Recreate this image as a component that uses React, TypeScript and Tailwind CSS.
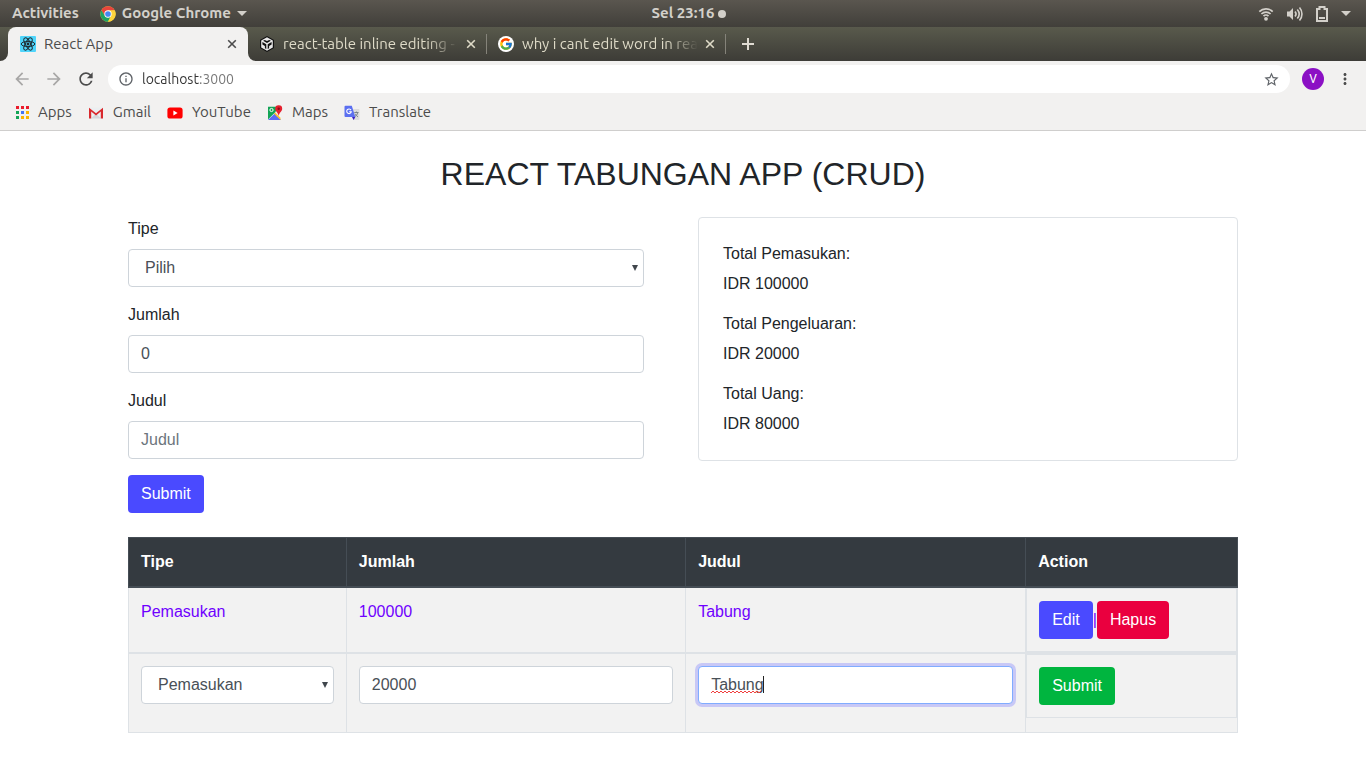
import { useState, type ReactNode, type SelectHTMLAttributes } from "react";
import { FcGoogle } from "react-icons/fc";
import {
  MdArrowBack,
  MdArrowForward,
  MdInfoOutline,
  MdMoreVert,
  MdRefresh,
  MdStarBorder,
} from "react-icons/md";

/* ---------- icons ---------- */

function ChromeIcon() {
  return (
    <svg viewBox="0 0 48 48" className="size-4" aria-hidden="true">
      <circle cx="24" cy="24" r="23" fill="#fdd33c" />
      <path d="M4.1 12.5A23 23 0 0 1 43.9 12.5L24 13.5 14 29.5Z" fill="#e8453c" />
      <path d="M4.1 12.5 14.5 29.5 24 34.5 33 30 24 47A23 23 0 0 1 4.1 12.5Z" fill="#1ea362" />
      <path d="M24 13.5H44.4A23 23 0 0 1 24 47L33.5 29.5Z" fill="#fdd33c" />
      <circle cx="24" cy="24" r="11" fill="#fff" />
      <circle cx="24" cy="24" r="8.5" fill="#4688f1" />
    </svg>
  );
}

function ReactIcon() {
  return (
    <svg viewBox="0 0 16 16" className="size-4 shrink-0" aria-hidden="true">
      <rect width="16" height="16" rx="1" fill="#4fd5fb" />
      <g fill="none" stroke="#1f2a30" strokeWidth="1">
        <ellipse cx="8" cy="8" rx="6.8" ry="2.6" />
        <ellipse cx="8" cy="8" rx="6.8" ry="2.6" transform="rotate(60 8 8)" />
        <ellipse cx="8" cy="8" rx="6.8" ry="2.6" transform="rotate(120 8 8)" />
      </g>
      <circle cx="8" cy="8" r="1.4" fill="#1f2a30" />
    </svg>
  );
}

function CubeIcon() {
  return (
    <svg viewBox="0 0 16 16" className="size-4 shrink-0" aria-hidden="true">
      <path d="M8 0 15 3.900v8.200L8 16 1 12.100V3.900Z" fill="#111" />
      <path d="M8 1.300 13.800 4.500v7L8 14.700 2.200 11.500v-7Z" fill="#e8e8e8" />
      <path d="m5.800 3.900 2.200 1.200 2.200-1.200 1.700.9L8 7 4.100 4.800Z" fill="#111" />
      <path d="M3.400 6 7.300 8.200v4.800l-1.400-.8V10L3.400 8.600Z" fill="#111" />
      <path d="M12.600 6 8.700 8.200v4.800l1.400-.8V10l2.500-1.400Z" fill="#111" />
    </svg>
  );
}

function GoogleTabIcon() {
  return (
    <span className="flex size-4 shrink-0 items-center justify-center rounded-full bg-white">
      <FcGoogle size={14} />
    </span>
  );
}

function AppsIcon() {
  const colors = [
    "#ea1c2c", "#ea1c2c", "#ea1c2c",
    "#13a456", "#4374f5", "#fbb400",
    "#13a456", "#fbb400", "#fbb400",
  ];
  return (
    <svg viewBox="0 0 13 13" className="size-[13px]" aria-hidden="true">
      {colors.map((fill, i) => (
        <rect key={i} x={(i % 3) * 5} y={Math.floor(i / 3) * 5} width="3" height="3" fill={fill} />
      ))}
    </svg>
  );
}

function GmailIcon() {
  return (
    <svg viewBox="0 0 16 16" className="size-4" aria-hidden="true">
      <path d="M1 2.500h14v11H1Z" fill="#eceff1" />
      <path d="M3 13.500 8 8.500l5 5Z" fill="#d5d8db" />
      <path d="M1 2.700 8 8.300l7-5.600V13.500h-2.200V6.500L8 10.500 3.200 6.500v7H1Z" fill="#d9292d" />
    </svg>
  );
}

function YouTubeIcon() {
  return (
    <svg viewBox="0 0 16 16" className="size-4" aria-hidden="true">
      <rect x=".4" y="2.4" width="15.2" height="11.2" rx="2.6" fill="#f00" />
      <path d="M6.4 5.6v4.8L10.6 8Z" fill="#fff" />
    </svg>
  );
}

function MapsIcon() {
  return (
    <svg viewBox="0 0 16 16" className="size-4" aria-hidden="true">
      <path d="M1 1.8h12.5V15H1Z" fill="#f4f4f4" />
      <path d="M1 1.8h9.6L8.5 7 1 14.5Z" fill="#13a456" />
      <path d="m1 15 6.8-6.6L14 15Z" fill="#5b6cf6" />
      <path d="m8.2 7.5 5.3 5.3V15L7 8.7Z" fill="#fbc02d" />
      <circle cx="4.5" cy="5" r="1.6" fill="none" stroke="#fff" />
      <path d="M11.700.3a3.400 3.400 0 0 1 3.500 3.400c0 2.600-2.900 3.500-3.500 7.400-.6-3.900-3.500-4.800-3.500-7.400A3.400 3.400 0 0 1 11.700.3Z" fill="#e5202e" />
      <circle cx="11.700" cy="3.700" r="1.200" fill="#8b0e18" />
    </svg>
  );
}

function TranslateIcon() {
  return (
    <svg viewBox="0 0 16 16" className="size-4" aria-hidden="true">
      <path d="M6 4h8.500a1 1 0 0 1 1 1v9a1 1 0 0 1-1 1H9.500Z" fill="#dcdcdc" />
      <path d="M1.500.700h6.300L11.300 12H1.500a1 1 0 0 1-1-1V1.700a1 1 0 0 1 1-1Z" fill="#5b6ff0" />
      <path d="M8 12h3.300L9.600 15Z" fill="#3a1fc0" />
      <path d="M7 5.100A2.300 2.300 0 1 0 7.300 6.700H5.200" fill="none" stroke="#fff" strokeWidth="1.100" />
      <path d="M10.300 7.500h4.200M12.400 6.500v1M13.700 7.700c-.3 1.700-1.400 3-2.600 3.700M11.300 8.800c.5 1.300 1.600 2.400 2.700 3" fill="none" stroke="#6f7a80" strokeWidth=".9" />
    </svg>
  );
}

function CloseIcon() {
  return (
    <svg viewBox="0 0 10 10" className="size-[10px]" aria-hidden="true">
      <path d="m1.200 1.200 7.600 7.600M8.800 1.200 1.200 8.800" stroke="currentColor" strokeWidth="1.600" />
    </svg>
  );
}

function CaretDown() {
  return (
    <svg viewBox="0 0 10 5" className="h-[5px] w-[10px]" aria-hidden="true">
      <path d="M0 0h10L5 5Z" fill="currentColor" />
    </svg>
  );
}

function WifiIcon() {
  return (
    <svg viewBox="0 0 16 16" className="size-4" fill="none" stroke="currentColor" strokeWidth="1.700" aria-hidden="true">
      <path d="M1.300 5.600C5 1.900 11 1.900 14.700 5.600M3.400 8c2.600-2.600 6.600-2.600 9.200 0M5.500 10.200c1.400-1.400 3.600-1.400 5 0" />
      <circle cx="8" cy="12.800" r="1.900" fill="currentColor" stroke="none" />
    </svg>
  );
}

function VolumeIcon() {
  return (
    <svg viewBox="0 0 16 16" className="size-4" fill="none" stroke="currentColor" strokeWidth="1.600" aria-hidden="true">
      <path d="M0 5.500h2.500L6 2v12l-3.500-3.500H0Z" fill="currentColor" stroke="none" />
      <path d="M8 5.500c1.300 1.500 1.300 3.500 0 5M10.300 3.500c2.300 2.700 2.300 6.300 0 9M12.500 1.500c3.300 3.800 3.300 9.200 0 13" />
    </svg>
  );
}

function BatteryIcon() {
  return (
    <svg viewBox="0 0 12 16" className="h-4 w-3" aria-hidden="true">
      <path d="M1 3h2.500V1h5v2H11v12H1Z" fill="none" stroke="currentColor" strokeWidth="2" />
      <path d="M3 11h6v2H3Z" fill="currentColor" />
    </svg>
  );
}

/* ---------- desktop and browser ---------- */

function DesktopBar() {
  return (
    <header className="grid h-[27px] grid-cols-3 items-center bg-linear-to-b from-[#5a564f] to-[#413f3a] px-3 text-[15px] font-bold text-[#d3d0ca]">
      <div className="flex items-center gap-[21px]">
        <button type="button">Activities</button>
        <button type="button" className="flex items-center gap-1.5">
          <ChromeIcon />
          Google Chrome
          <CaretDown />
        </button>
      </div>
      <button type="button" className="flex items-center gap-1 justify-self-center pl-3">
        Sel 23:16
        <span className="size-2 rounded-full bg-[#d3d0ca]" />
      </button>
      <button type="button" aria-label="System menu" className="flex items-center gap-[13px] justify-self-end pr-[3px]">
        <WifiIcon />
        <VolumeIcon />
        <BatteryIcon />
        <CaretDown />
      </button>
    </header>
  );
}

function InactiveTab({ icon, title }: { icon: ReactNode; title: string }) {
  return (
    <div className="flex h-full w-[239px] items-center text-[#dfdbc8]">
      <button type="button" className="flex min-w-0 grow items-center gap-2 pl-[11px] text-left">
        {icon}
        <span className="w-44 whitespace-nowrap [mask-image:linear-gradient(to_right,black_82%,transparent)]">
          {title}
        </span>
      </button>
      <button type="button" aria-label={`Close ${title}`} className="pr-[10px] pl-2">
        <CloseIcon />
      </button>
      <span className="h-5 w-px bg-[#85837a]" />
    </div>
  );
}

function TabStrip() {
  return (
    <nav aria-label="Tabs" className="flex h-[34px] items-center bg-linear-to-b from-[#595a4c] to-[#3d3c37] text-[15px]">
      <span className="h-full w-2 bg-[#f2f1f0]">
        <span className="block h-full rounded-br-lg bg-linear-to-b from-[#595a4c] to-[#3d3c37]" />
      </span>
      <div className="flex h-full w-60 items-center rounded-t-lg bg-[#f2f1f0] pr-[11px] pl-3 text-[#4c4c4c]">
        <button type="button" className="flex grow items-center gap-2 text-left">
          <ReactIcon />
          React App
        </button>
        <button type="button" aria-label="Close React App">
          <CloseIcon />
        </button>
      </div>
      <div className="h-full grow bg-[#f2f1f0]">
        <div className="flex h-full items-center rounded-bl-lg bg-linear-to-b from-[#595a4c] to-[#3d3c37]">
          <InactiveTab icon={<CubeIcon />} title="react-table inline editing -" />
          <InactiveTab icon={<GoogleTabIcon />} title="why i cant edit word in rea" />
          <button type="button" aria-label="New tab" className="px-4 text-[#dfdbd2]">
            <svg viewBox="0 0 12 12" className="size-3" aria-hidden="true">
              <path d="M6 0v12M0 6h12" stroke="currentColor" strokeWidth="2" />
            </svg>
          </button>
        </div>
      </div>
    </nav>
  );
}

function AddressBar() {
  return (
    <div className="flex items-center gap-3 px-3 pt-1 text-[#4c4c4c]">
      <button type="button" aria-label="Back" className="text-[#a8a7a6]">
        <MdArrowBack size={20} />
      </button>
      <button type="button" aria-label="Forward" className="text-[#a8a7a6]">
        <MdArrowForward size={20} />
      </button>
      <button type="button" aria-label="Reload">
        <MdRefresh size={20} />
      </button>
      <div className="flex h-7 grow items-center gap-2 rounded-full bg-white px-2.5">
        <MdInfoOutline size={16} className="text-[#5f6368]" />
        <input
          aria-label="Address"
          defaultValue="localhost:3000"
          spellCheck={false}
          className="grow bg-linear-to-r from-[#333] from-[58px] to-[#757575] to-[58px] bg-clip-text text-sm text-transparent outline-none"
        />
        <button type="button" aria-label="Bookmark this page" className="text-[#5f6368]">
          <MdStarBorder size={17} />
        </button>
      </div>
      <button type="button" aria-label="Profile" className="flex size-[22px] items-center justify-center rounded-full bg-[#8b10c4] font-[Roboto,sans-serif] text-xs text-white">
        V
      </button>
      <button type="button" aria-label="Menu">
        <MdMoreVert size={18} />
      </button>
    </div>
  );
}

function Bookmarks() {
  const items = [
    { label: "Apps", icon: <AppsIcon /> },
    { label: "Gmail", icon: <GmailIcon /> },
    { label: "YouTube", icon: <YouTubeIcon /> },
    { label: "Maps", icon: <MapsIcon /> },
    { label: "Translate", icon: <TranslateIcon /> },
  ];
  return (
    <nav aria-label="Bookmarks" className="flex h-[37px] items-center gap-4 pt-0.5 pl-4 text-[15px] text-[#4c4c4c]">
      {items.map((item) => (
        <a key={item.label} href="#" className="flex items-center gap-[9px]">
          {item.icon}
          {item.label}
        </a>
      ))}
    </nav>
  );
}

/* ---------- page ---------- */

const control = "block h-[38px] w-full rounded border border-[#ced4da] bg-white px-3 text-base text-[#495057] placeholder:text-[#6c757d] outline-none";
const solidButton = "h-[38px] rounded px-[13px] text-base text-white";

function Select({ children, ...props }: SelectHTMLAttributes<HTMLSelectElement>) {
  return (
    <span className="relative block">
      <select
        {...props}
        className="block h-[38px] w-full appearance-none rounded border border-[#ced4da] bg-white px-4 text-base text-[#495057] outline-none"
      >
        {children}
      </select>
      <svg viewBox="0 0 6 6" className="pointer-events-none absolute top-4 right-[6px] size-[6px]" aria-hidden="true">
        <path d="M0 0h6L3 6Z" fill="#40464c" />
      </svg>
    </span>
  );
}

function EntryForm() {
  return (
    <form className="flex flex-col gap-4 pr-6" onSubmit={(e) => e.preventDefault()}>
      <div>
        <label htmlFor="tipe" className="mb-2 block">Tipe</label>
        <Select id="tipe" defaultValue="Pilih">
          <option>Pilih</option>
          <option>Pemasukan</option>
          <option>Pengeluaran</option>
        </Select>
      </div>
      <div>
        <label htmlFor="jumlah" className="mb-2 block">Jumlah</label>
        <input id="jumlah" defaultValue="0" className={control} />
      </div>
      <div>
        <label htmlFor="judul" className="mb-2 block">Judul</label>
        <input id="judul" placeholder="Judul" className={control} />
      </div>
      <button type="submit" className={`${solidButton} self-start bg-[#4a4aff]`}>Submit</button>
    </form>
  );
}

function Totals() {
  const totals = [
    ["Total Pemasukan:", "IDR 100000"],
    ["Total Pengeluaran:", "IDR 20000"],
    ["Total Uang:", "IDR 80000"],
  ];
  return (
    <dl className="flex flex-col gap-4 self-start rounded border border-[#dee2e6] p-6">
      {totals.map(([label, value]) => (
        <div key={label} className="flex flex-col gap-1.5">
          <dt>{label}</dt>
          <dd>{value}</dd>
        </div>
      ))}
    </dl>
  );
}

function TitleEditor() {
  const [title, setTitle] = useState("Tabung");
  return (
    <div className="relative">
      <input
        aria-label="Judul"
        value={title}
        onChange={(e) => setTitle(e.target.value)}
        spellCheck={false}
        className="block h-[38px] w-full rounded border border-[#80acff] bg-white px-3 text-base text-[#495057] ring-3 ring-[#c8c8f6] outline-none"
      />
      <svg viewBox="0 0 53 18" className="pointer-events-none absolute top-[10px] left-[13px] h-[18px] w-[53px]" aria-hidden="true">
        <path
          d="M0 17l2-2 2 2 2-2 2 2 2-2 2 2 2-2 2 2 2-2 2 2 2-2 2 2 2-2 2 2 2-2 2 2 2-2 2 2 2-2 2 2 2-2 2 2 2-2 2 2 2-2"
          fill="none"
          stroke="#f04040"
        />
        <path d="M52.500 0v17" stroke="#222" />
      </svg>
    </div>
  );
}

function SavingsTable() {
  const head = "border border-[#454d55] border-b-2 p-3 text-left font-bold";
  const cell = "border border-[#dee2e6] p-3 align-top";
  const rowCell = "border border-[#dee2e6] border-b-2 p-3 align-top";
  return (
    <table className="mt-6 w-full table-fixed border-collapse">
      <colgroup>
        <col className="w-[19.64%]" />
        <col className="w-[30.6%]" />
        <col className="w-[30.66%]" />
        <col />
      </colgroup>
      <thead className="bg-[#343a40] text-white">
        <tr>
          <th scope="col" className={head}>Tipe</th>
          <th scope="col" className={head}>Jumlah</th>
          <th scope="col" className={head}>Judul</th>
          <th scope="col" className={head}>Action</th>
        </tr>
      </thead>
      <tbody className="bg-[#f2f2f2]">
        <tr className="text-[#6f00ff]">
          <td className={rowCell}>Pemasukan</td>
          <td className={rowCell}>100000</td>
          <td className={rowCell}>Tabung</td>
          <td className="border border-b-2 border-[#dee2e6] p-0 align-top">
            <div className="flex items-center border border-[#dee2e6] p-3">
              <button type="button" className={`${solidButton} bg-[#4a4aff]`}>Edit</button>
              <span>|</span>
              <button type="button" className={`${solidButton} bg-[#ea003f]`}>Hapus</button>
            </div>
          </td>
        </tr>
        <tr>
          <td className={cell}>
            <Select aria-label="Tipe" defaultValue="Pemasukan">
              <option>Pemasukan</option>
              <option>Pengeluaran</option>
            </Select>
          </td>
          <td className={cell}>
            <input aria-label="Jumlah" defaultValue="20000" className={control} />
          </td>
          <td className="border border-[#dee2e6] px-3 pt-3 pb-7 align-top">
            <TitleEditor />
          </td>
          <td className="border border-[#dee2e6] p-0 align-top">
            <div className="border border-[#dee2e6] p-3">
              <button type="button" className={`${solidButton} block bg-[#00b53f]`}>Submit</button>
            </div>
          </td>
        </tr>
      </tbody>
    </table>
  );
}

export default function App() {
  return (
    <div className="min-h-screen bg-white font-[Ubuntu,'Noto_Sans',sans-serif]">
      <DesktopBar />
      <TabStrip />
      <div className="border-b border-[#cfcecd] bg-[#f2f1f0]">
        <AddressBar />
        <Bookmarks />
      </div>
      <main className="mx-auto max-w-[1140px] px-[15px] pt-6 pb-8 font-['Liberation_Sans',Arial,sans-serif] text-base text-[#212529]">
        <h1 className="mb-6 text-center text-[32px] leading-[38px]">REACT TABUNGAN APP (CRUD)</h1>
        <div className="grid grid-cols-2 gap-[30px]">
          <EntryForm />
          <Totals />
        </div>
        <SavingsTable />
      </main>
    </div>
  );
}
